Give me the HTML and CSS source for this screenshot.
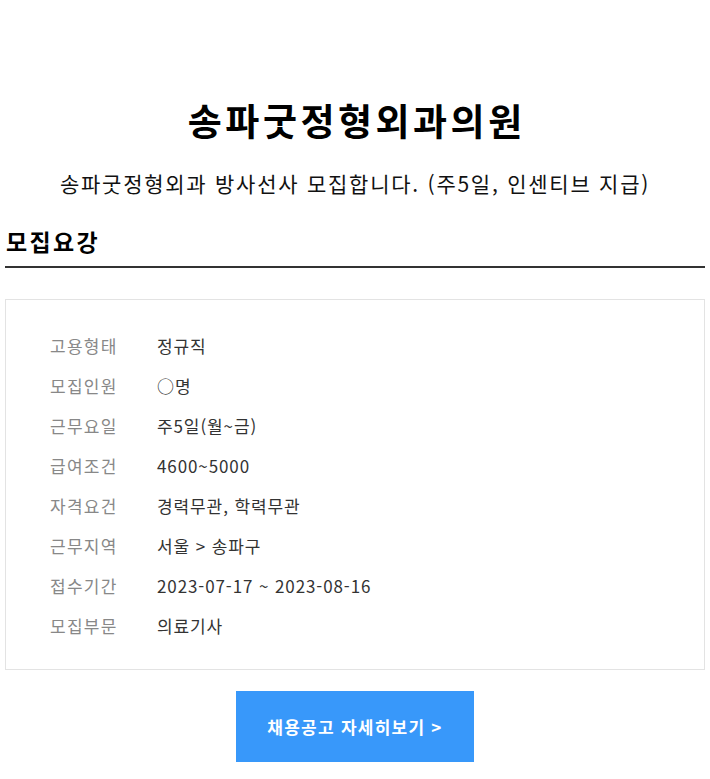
FILE: index.html
```html
<!DOCTYPE html>
<html lang="ko">
<head>
<meta charset="utf-8">
<title>송파굿정형외과의원</title>
<link rel="stylesheet" href="styles.css">
</head>
<body>
<div class="page">
  <h1 class="title">송파굿정형외과의원</h1>
  <p class="subtitle">송파굿정형외과 방사선사 모집합니다. (주5일, 인센티브 지급)</p>
  <h2 class="section-title">모집요강</h2>
  <div class="info-box">
    <dl class="info-list">
      <div class="row"><dt>고용형태</dt><dd>정규직</dd></div>
      <div class="row"><dt>모집인원</dt><dd>○명</dd></div>
      <div class="row"><dt>근무요일</dt><dd>주5일(월~금)</dd></div>
      <div class="row"><dt>급여조건</dt><dd>4600~5000</dd></div>
      <div class="row"><dt>자격요건</dt><dd>경력무관, 학력무관</dd></div>
      <div class="row"><dt>근무지역</dt><dd>서울 &gt; 송파구</dd></div>
      <div class="row"><dt>접수기간</dt><dd>2023-07-17 ~ 2023-08-16</dd></div>
      <div class="row"><dt>모집부문</dt><dd>의료기사</dd></div>
    </dl>
  </div>
  <div class="actions">
    <a class="btn" href="#">채용공고 자세히보기 &gt;</a>
  </div>
</div>
</body>
</html>
```
FILE: styles.css
```css
html, body {
  margin: 0;
  padding: 0;
  background: #fff;
}
.page {
  padding: 0 5px;
  font-family: "Noto Sans CJK KR", "Noto Sans", sans-serif;
  color: #000;
}
.title {
  margin: 0;
  padding-top: 92px;
  font-size: 37px;
  line-height: 56px;
  font-weight: 700;
  letter-spacing: 3.5px;
  text-indent: 3.5px;
  text-align: center;
}
.subtitle {
  margin: 20px 0 0;
  font-size: 21px;
  line-height: 30px;
  letter-spacing: 1.75px;
  text-align: center;
  color: #111;
}
.section-title {
  margin: 28px 0 0;
  padding: 0 1px 10px;
  font-size: 23px;
  line-height: 30px;
  font-weight: 700;
  letter-spacing: 2.3px;
  border-bottom: 2px solid #333;
}
.info-box {
  margin-top: 31px;
  border: 1px solid #e3e3e3;
  padding: 26px 44px 23px;
}
.info-list {
  margin: 0;
}
.row {
  display: flex;
  font-size: 17px;
  line-height: 40px;
}
.row dt {
  width: 107px;
  flex: none;
  color: #888;
  letter-spacing: 1.25px;
}
.row dd {
  margin: 0;
  color: #333;
  letter-spacing: 0.9px;
}
.actions {
  display: flex;
  justify-content: center;
  margin-top: 21px;
}
.btn {
  display: flex;
  align-items: center;
  justify-content: center;
  width: 238px;
  height: 71px;
  background: #3898fa;
  color: #fff;
  font-size: 17px;
  font-weight: 700;
  letter-spacing: 1.25px;
  text-decoration: none;
}
```
